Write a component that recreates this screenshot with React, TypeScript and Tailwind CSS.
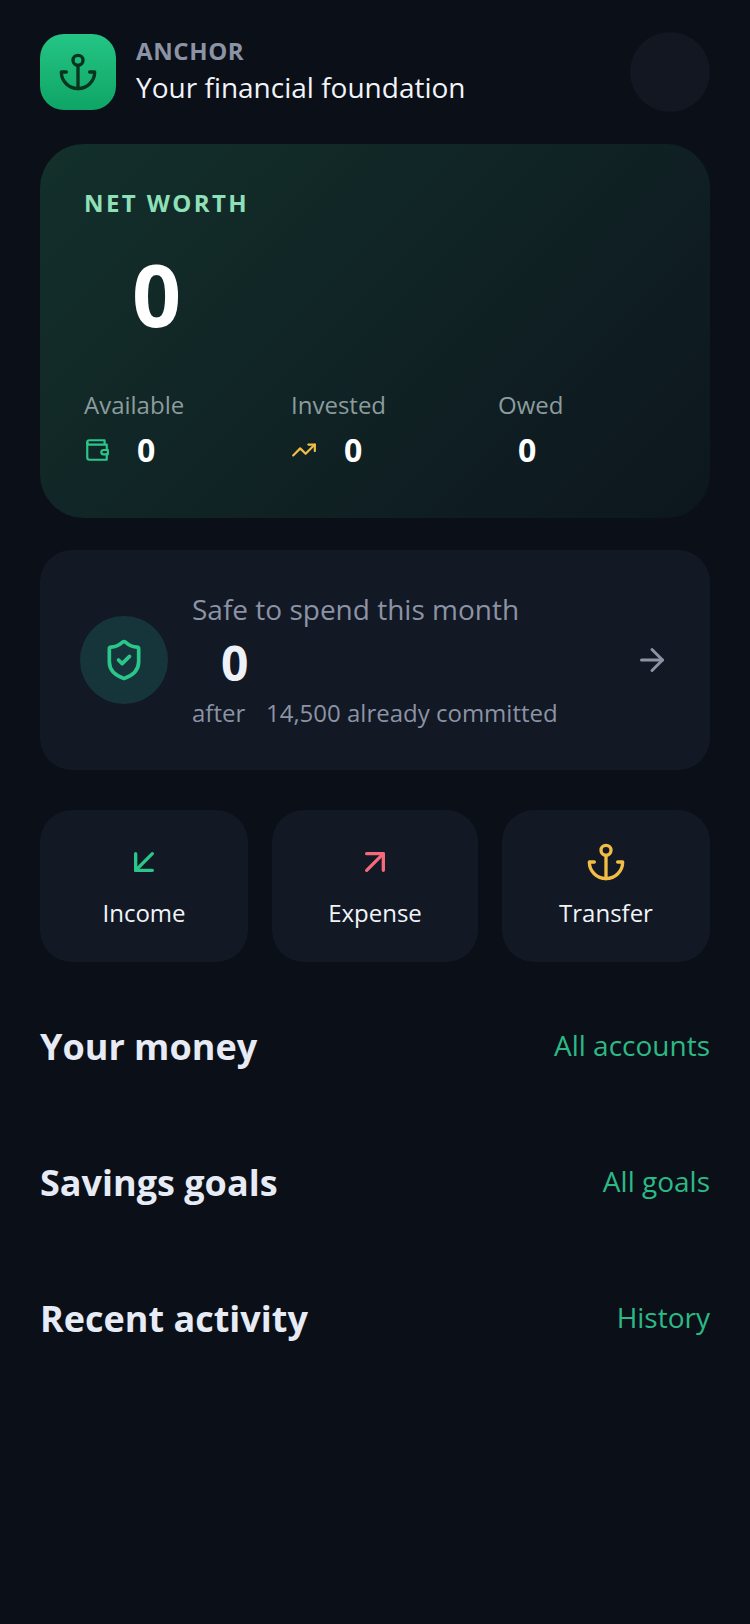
import { ArrowDownLeft, ArrowRight, ArrowUpRight, ShieldCheck, TrendingUp } from "lucide-react";

function AnchorIcon({ className }: { className: string }) {
  return (
    <svg
      width="40"
      height="40"
      viewBox="0 0 24 24"
      fill="none"
      stroke="currentColor"
      strokeWidth="2"
      strokeLinecap="round"
      strokeLinejoin="round"
      className={className}
    >
      <circle cx="12" cy="5" r="3" />
      <path d="M12 22V8" />
      <path d="M5 12H2a10 10 0 0 0 20 0h-3" />
    </svg>
  );
}

function WalletIcon({ className }: { className: string }) {
  return (
    <svg
      width="26"
      height="26"
      viewBox="0 0 24 24"
      fill="none"
      stroke="currentColor"
      strokeWidth="2"
      strokeLinecap="round"
      strokeLinejoin="round"
      className={className}
    >
      <path d="M21 12V7H5a2 2 0 0 1 0-4h14v4" />
      <path d="M3 5v14a2 2 0 0 0 2 2h16v-5" />
      <path d="M18 12a2 2 0 0 0 0 4h4v-4Z" />
    </svg>
  );
}

const stats = [
  { label: "Available", icon: <WalletIcon className="text-[#2bc78a]" /> },
  { label: "Invested", icon: <TrendingUp size={26} strokeWidth={2} className="text-[#f2bd44]" /> },
  { label: "Owed", icon: null },
];

const sections = [
  { title: "Your money", link: "All accounts" },
  { title: "Savings goals", link: "All goals" },
  { title: "Recent activity", link: "History" },
];

export default function App() {
  return (
    <div className="w-[750px] h-[1624px] overflow-hidden bg-[#0b0f18] px-10 pt-8 font-['Open_Sans',sans-serif] text-white">
      {/* Header */}
      <div className="flex items-center justify-between h-20">
        <div className="flex items-center gap-5">
          <div className="w-[76px] h-[76px] rounded-3xl bg-gradient-to-b from-[#24c585] to-[#0ea566] flex items-center justify-center">
            <AnchorIcon className="text-[#07331f]" />
          </div>
          <div>
            <div className="mb-1 text-[24px] leading-[26px] font-bold tracking-[0.6px] text-[#8b93a5]">ANCHOR</div>
            <div className="text-[28px] leading-[38px] text-[#f1f4f9]">Your financial foundation</div>
          </div>
        </div>
        <div className="w-20 h-20 rounded-full bg-[#121722]" />
      </div>

      {/* Net worth */}
      <div className="mt-8 h-[374px] rounded-[44px] bg-[linear-gradient(135deg,#13302b,#0d161e)] px-11 pt-[43px]">
        <div className="text-[24px] leading-[32px] font-bold tracking-[2.4px] text-[#8fe0b8]">NET WORTH</div>
        <div className="mt-[21px] pl-12 text-[86px] leading-[108px] font-bold">0</div>
        <div className="mt-[41px] flex">
          {stats.map((s) => (
            <div key={s.label} className="w-[207px] shrink-0">
              <div className="text-[24px] leading-[32px] text-[#8c9c9d]">{s.label}</div>
              <div className={s.icon ? "mt-[7px] flex items-center gap-[27px]" : "mt-[7px] flex items-center pl-[20px]"}>
                {s.icon}
                <span className="text-[32px] leading-[44px] font-bold">0</span>
              </div>
            </div>
          ))}
        </div>
      </div>

      {/* Safe to spend */}
      <div className="mt-8 h-[220px] rounded-[32px] bg-[#121824] pl-10 pr-10 flex items-center">
        <div className="w-[88px] h-[88px] rounded-full bg-[#15353a] flex items-center justify-center">
          <ShieldCheck size={44} strokeWidth={2} className="text-[#2bc78a]" />
        </div>
        <div className="ml-6 flex-1">
          <div className="text-[28px] leading-[38px] text-[#8b93a5]">Safe to spend this month</div>
          <div className="mt-[3px] pl-[29px] text-[48px] leading-[64px] font-bold text-[#eef1f7]">0</div>
          <div className="mt-px text-[24px] leading-[34px] text-[#8b93a5] whitespace-pre">
            after   <span className="ml-[2px]">14,500 already committed</span>
          </div>
        </div>
        <ArrowRight size={36} strokeWidth={2} className="text-[#8b93a5]" />
      </div>

      {/* Quick actions */}
      <div className="mt-10 grid grid-cols-[208px_206px_208px] gap-6">
        <div className="h-[152px] rounded-[32px] bg-[#121824] flex flex-col items-center pt-8">
          <ArrowDownLeft size={40} strokeWidth={2} className="text-[#2bc78a]" />
          <div className="mt-[14px] text-[24px] leading-[34px] text-[#f1f4f9]">Income</div>
        </div>
        <div className="h-[152px] rounded-[32px] bg-[#121824] flex flex-col items-center pt-8">
          <ArrowUpRight size={40} strokeWidth={2} className="text-[#f6697a]" />
          <div className="mt-[14px] text-[24px] leading-[34px] text-[#f1f4f9]">Expense</div>
        </div>
        <div className="h-[152px] rounded-[32px] bg-[#121824] flex flex-col items-center pt-8">
          <AnchorIcon className="text-[#f2bd44]" />
          <div className="mt-[14px] text-[24px] leading-[34px] text-[#f1f4f9]">Transfer</div>
        </div>
      </div>

      {/* Sections */}
      <div className="mt-[60px] flex flex-col gap-[88px]">
        {sections.map((s) => (
          <div key={s.title} className="flex items-center justify-between h-[48px]">
            <div className="pt-[2px] text-[36px] leading-[48px] font-bold text-[#e6ebf5]">{s.title}</div>
            <div className="pb-[2px] text-[28px] leading-[38px] text-[#2bb985]">{s.link}</div>
          </div>
        ))}
      </div>
    </div>
  );
}
